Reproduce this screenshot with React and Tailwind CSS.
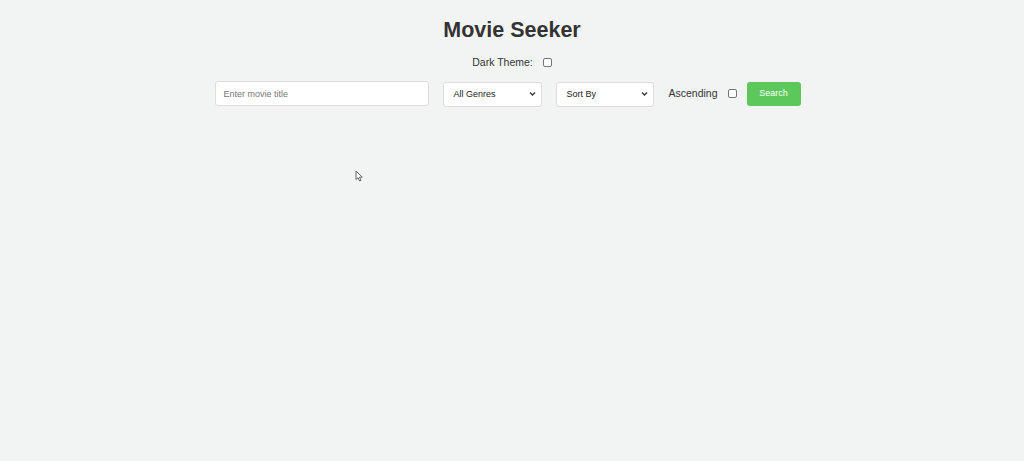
import React from "react";

function Chevron() {
  return (
    <svg className="pointer-events-none absolute right-[6px] top-1/2 -translate-y-1/2" width="7" height="5" viewBox="0 0 7 5">
      <path d="M1 1 L3.5 3.5 L6 1" fill="none" stroke="#333" strokeWidth="1.3" />
    </svg>
  );
}

function Check({ className = "" }) {
  return (
    <span className={"inline-block w-[9px] h-[9px] shrink-0 rounded-[2px] border border-[#767676] bg-white " + className} />
  );
}

export default function App() {
  return (
    <div className="relative min-h-[461px] w-full bg-[#f2f3f3] font-['Liberation_Sans',Arial,sans-serif] text-[#333]">
      <div className="flex flex-col items-center pt-[17px]">
        <h1 className="text-[21.5px] leading-[26px] font-bold text-[#333]">Movie Seeker</h1>
        <div className="mt-[12px] flex items-center text-[10.5px] leading-[14px] text-[#333]">
          <span>Dark Theme:</span>
          <Check className="ml-[10px]" />
        </div>
        <div className="mt-[11px] mr-[8px] flex items-center">
          <input
            placeholder="Enter movie title"
            className="w-[214px] h-[25px] rounded-[3px] border border-[#ddd] bg-white px-[7px] text-[9px] placeholder:text-[#777] outline-none"
          />
          <div className="relative ml-[14px]">
            <select className="appearance-none w-[99px] h-[25px] rounded-[3px] border border-[#ddd] bg-white pl-[9px] text-[9px] text-[#222] outline-none">
              <option>All Genres</option>
            </select>
            <Chevron />
          </div>
          <div className="relative ml-[14px]">
            <select className="appearance-none w-[98px] h-[25px] rounded-[3px] border border-[#ddd] bg-white pl-[9px] text-[9px] text-[#222] outline-none">
              <option>Sort By</option>
            </select>
            <Chevron />
          </div>
          <span className="ml-[14px] text-[10.5px] text-[#333]">Ascending</span>
          <Check className="ml-[10px]" />
          <button className="ml-[10px] w-[54px] h-[24px] rounded-[3px] bg-[#5cc85c] text-[9px] text-white">Search</button>
        </div>
      </div>
      <svg className="absolute left-[355px] top-[170px]" width="9" height="12" viewBox="0 0 9 12">
        <path d="M1 1 L1 9.5 L3 7.7 L4.6 11 L6 10.3 L4.5 7.2 L7.3 7.2 Z" fill="#fff" stroke="#555" strokeWidth="0.9" strokeLinejoin="round" />
      </svg>
    </div>
  );
}
